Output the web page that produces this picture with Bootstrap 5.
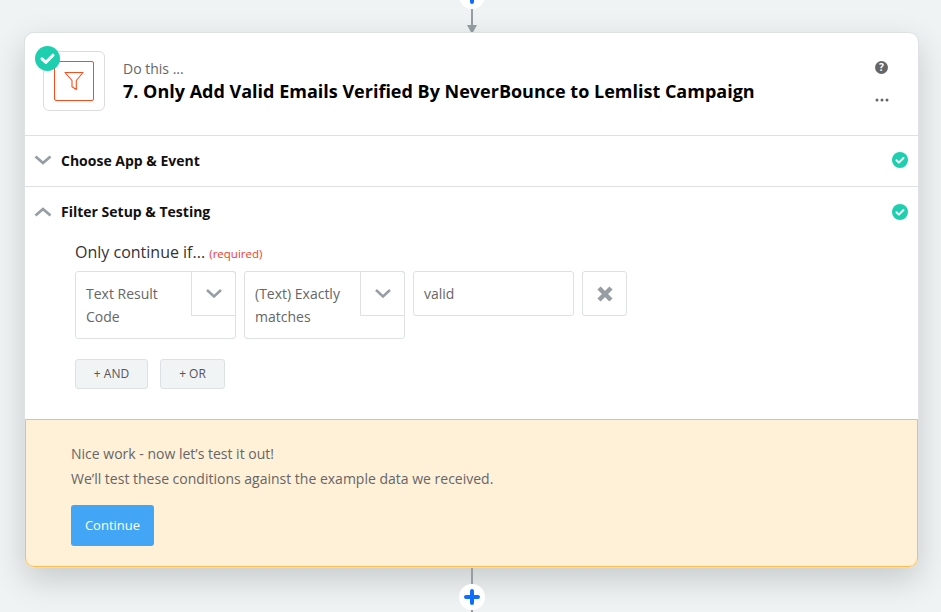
<!doctype html>
<html lang="en">
<head>
<meta charset="utf-8">
<title>Filter step</title>
<link href="https://cdn.jsdelivr.net/npm/bootstrap@5.3.0/dist/css/bootstrap.min.css" rel="stylesheet">
<style>
html,body{height:612px;overflow:hidden}
body{background:#eff3f4;font-family:"Open Sans","Noto Sans",sans-serif;color:#666;font-size:14px}
.zap-stage{height:612px;padding:0 22px 0 24px;display:flex;flex-direction:column;align-items:stretch;overflow:hidden}
.zap-conn{position:relative;flex:none}
.zap-conn-top{height:32px}
.zap-conn-bot{height:45px}
.zap-line{position:absolute;left:50%;margin-left:-.5px;width:2px;background:#969ea3;top:0;bottom:0}
.zap-conn-top .zap-line{bottom:6px}
.zap-arrow{position:absolute;left:50%;margin-left:-5px;bottom:-2px;width:0;height:0;border-left:5.5px solid transparent;border-right:5.5px solid transparent;border-top:9px solid #969ea3}
.zap-plus{position:absolute;left:50%;margin-left:-12.5px;width:26px;height:26px;border-radius:50%;background:#fff;display:flex;align-items:center;justify-content:center}
.zap-conn-top .zap-plus{top:-17px}
.zap-conn-bot .zap-plus{top:16px}
.zap-card{flex:none;background:#fff;border:1px solid #dde1e3;border-radius:10px;box-shadow:0 12px 32px rgba(0,0,0,.17);position:relative}
.zap-head{height:102px;padding:0 30px 0 18px}
.zap-appbox{width:62px;height:60px;border:1px solid #dadcdd;border-radius:6px;background:#fff;position:relative;margin-right:18px;margin-top:-7px}
.zap-appicon{width:40px;height:40px;border:1px solid #ff4a1c;border-radius:2px}
.zap-badge{position:absolute;left:-9px;top:-6px;width:25px;height:25px;display:block}
.zap-headtext{padding-bottom:4px}
.zap-over{font-size:14px;line-height:19px;color:#666;margin-top:-1px;margin-bottom:1px}
.zap-title{font-size:18px;line-height:25px;font-weight:700;color:#000;margin:0}
.zap-tools{width:13px;gap:24px;margin-top:-6px}
.zap-row{height:51px;border-top:1px solid #dde1e3;padding:0 10px 0 9px}
.zap-row-first{padding-bottom:2px}
.zap-row-label{font-size:14px;font-weight:700;color:#111;margin-left:9px}
.zap-row-open{height:50px}
.zap-filter{padding:0 0 30px 50px}
.zap-lead{font-size:16px;line-height:20px;color:#333;margin-bottom:7px;padding-top:6px}
.zap-req{font-size:11.500px;color:#f5392b}
.zap-fields{gap:8px;align-items:flex-start}
.zap-select{width:161px;height:68px;border:1px solid #dde1e3;border-radius:3px;position:relative;padding:10px 45px 0 10px;line-height:23px;color:#666;font-size:14px}
.zap-caret{position:absolute;right:-1px;top:-1px;width:45px;height:45px;border:1px solid #dde1e3;border-top-right-radius:3px;display:flex;align-items:center;justify-content:center}
.zap-input{width:161px;height:45px;border:1px solid #dde1e3;border-radius:3px;padding:10px;line-height:23px;color:#666;font-size:14px}
.zap-remove{width:45px;height:45px;border:1px solid #dde1e3;border-radius:3px;display:flex;align-items:center;justify-content:center;background:#fff}
.zap-logic{gap:12px;margin-top:20px}
.zap-logic-btn{height:30px;background:#f1f4f5;border:1px solid #dde1e3;border-radius:3px;font-size:12px;color:#555;padding:0;display:flex;align-items:center;justify-content:center}
.zap-and{width:73px}
.zap-or{width:65px}
.zap-notice{background:#fff0d8;border:1px solid #ffbd4f;border-radius:0 0 9px 9px;height:148px;padding:21px 45px}
.zap-notice p{margin:0;line-height:25px;font-size:14px;color:#666}
.zap-continue{background:#42a5f5;border:0;color:#fff;border-radius:3px;width:83px;height:41px;font-size:13px;padding:0;margin-top:14px}
</style>
</head>
<body>
<div class="zap-stage">
  <div class="zap-conn zap-conn-top">
    <div class="zap-line"></div><div class="zap-arrow"></div>
    <div class="zap-plus"><svg width="16" height="16" viewBox="0 0 16 16"><path d="M8 2v12M2 8h12" stroke="#0d6efd" stroke-width="4" stroke-linecap="round"/></svg></div>
  </div>
  <div class="zap-card">
    <div class="zap-head d-flex align-items-center">
      <div class="zap-appbox d-flex align-items-center justify-content-center flex-shrink-0">
        <div class="zap-appicon d-flex align-items-center justify-content-center">
          <svg width="20" height="20" viewBox="0 0 20 20"><path d="M1 1.500h18L12.300 9.500v9L8 15.800V9.500z" fill="none" stroke="#ff4a1c" stroke-width="1.100" stroke-linejoin="round"/></svg>
        </div>
        <svg class="zap-badge" viewBox="0 0 25 25"><circle cx="12.500" cy="12.500" r="12.500" fill="#1dcfae"/><path d="M7 12.800l3.800 3.600L18 9.200" fill="none" stroke="#fff" stroke-width="3" stroke-linecap="round" stroke-linejoin="round"/></svg>
      </div>
      <div class="zap-headtext flex-grow-1">
        <div class="zap-over">Do this ...</div>
        <h1 class="zap-title">7. Only Add Valid Emails Verified By NeverBounce to Lemlist Campaign</h1>
      </div>
      <div class="zap-tools d-flex flex-column align-items-center">
        <svg width="13" height="13" viewBox="0 0 14 14"><circle cx="7" cy="7" r="7" fill="#666"/><text x="7" y="10.800" text-anchor="middle" font-family="Open Sans" font-size="11" font-weight="700" fill="#fff">?</text></svg>
        <svg width="14" height="4" viewBox="0 0 14 4"><circle cx="2" cy="2" r="1.500" fill="#666"/><circle cx="7" cy="2" r="1.500" fill="#666"/><circle cx="12" cy="2" r="1.500" fill="#666"/></svg>
      </div>
    </div>
    <div class="zap-row zap-row-first d-flex align-items-center">
      <svg width="18" height="10" viewBox="0 0 18 10"><path d="M1.500 1.500L9 8l7.500-6.500" fill="none" stroke="#969ea3" stroke-width="2.800"/></svg>
      <span class="zap-row-label flex-grow-1">Choose App &amp; Event</span>
      <svg width="16" height="16" viewBox="0 0 16 16"><circle cx="8" cy="8" r="8" fill="#1dcfae"/><path d="M4.500 8.300l2.400 2.300L11.500 6" fill="none" stroke="#fff" stroke-width="2" stroke-linecap="round" stroke-linejoin="round"/></svg>
    </div>
    <div class="zap-row zap-row-open d-flex align-items-center">
      <svg width="18" height="10" viewBox="0 0 18 10"><path d="M1.500 8.500L9 2l7.500 6.500" fill="none" stroke="#969ea3" stroke-width="2.800"/></svg>
      <span class="zap-row-label flex-grow-1">Filter Setup &amp; Testing</span>
      <svg width="16" height="16" viewBox="0 0 16 16"><circle cx="8" cy="8" r="8" fill="#1dcfae"/><path d="M4.500 8.300l2.400 2.300L11.500 6" fill="none" stroke="#fff" stroke-width="2" stroke-linecap="round" stroke-linejoin="round"/></svg>
    </div>
    <div class="zap-filter">
      <div class="zap-lead">Only continue if... <span class="zap-req">(required)</span></div>
      <div class="zap-fields d-flex">
        <div class="zap-select">Text Result Code<span class="zap-caret"><svg width="16" height="9" viewBox="0 0 16 9"><path d="M1 1l7 6.500L15 1" fill="none" stroke="#969ea3" stroke-width="2.500"/></svg></span></div>
        <div class="zap-select">(Text) Exactly matches<span class="zap-caret"><svg width="16" height="9" viewBox="0 0 16 9"><path d="M1 1l7 6.500L15 1" fill="none" stroke="#969ea3" stroke-width="2.500"/></svg></span></div>
        <div class="zap-input">valid</div>
        <div class="zap-remove"><svg width="16" height="16" viewBox="0 0 16 16"><path d="M2 2l12 12M14 2L2 14" stroke="#969ea3" stroke-width="4.500"/></svg></div>
      </div>
      <div class="zap-logic d-flex">
        <button type="button" class="zap-logic-btn zap-and">+ AND</button>
        <button type="button" class="zap-logic-btn zap-or">+ OR</button>
      </div>
    </div>
    <div class="zap-notice">
      <p>Nice work - now let’s test it out!</p>
      <p>We’ll test these conditions against the example data we received.</p>
      <button type="button" class="zap-continue">Continue</button>
    </div>
  </div>
  <div class="zap-conn zap-conn-bot">
    <div class="zap-line"></div>
    <div class="zap-plus"><svg width="16" height="16" viewBox="0 0 16 16"><path d="M8 2v12M2 8h12" stroke="#0d6efd" stroke-width="4" stroke-linecap="round"/></svg></div>
  </div>
</div>
<script src="https://cdn.jsdelivr.net/npm/bootstrap@5.3.0/dist/js/bootstrap.bundle.min.js"></script>
</body>
</html>
